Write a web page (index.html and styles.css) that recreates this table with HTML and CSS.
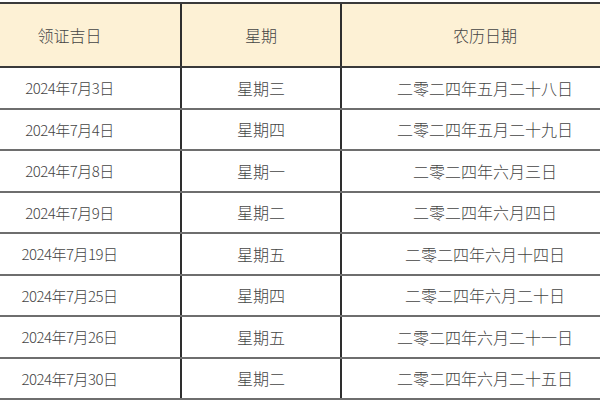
FILE: index.html
```html
<!DOCTYPE html>
<html lang="zh-CN">
<head>
<meta charset="utf-8">
<title>领证吉日</title>
<link rel="stylesheet" href="styles.css">
</head>
<body>
<div class="table">
  <div class="row head">
    <div class="cell">领证吉日</div>
    <div class="cell">星期</div>
    <div class="cell">农历日期</div>
  </div>
  <div class="row">
    <div class="cell date">2024年7月3日</div>
    <div class="cell">星期三</div>
    <div class="cell">二零二四年五月二十八日</div>
  </div>
  <div class="row">
    <div class="cell date">2024年7月4日</div>
    <div class="cell">星期四</div>
    <div class="cell">二零二四年五月二十九日</div>
  </div>
  <div class="row">
    <div class="cell date">2024年7月8日</div>
    <div class="cell">星期一</div>
    <div class="cell">二零二四年六月三日</div>
  </div>
  <div class="row">
    <div class="cell date">2024年7月9日</div>
    <div class="cell">星期二</div>
    <div class="cell">二零二四年六月四日</div>
  </div>
  <div class="row">
    <div class="cell date">2024年7月19日</div>
    <div class="cell">星期五</div>
    <div class="cell">二零二四年六月十四日</div>
  </div>
  <div class="row">
    <div class="cell date">2024年7月25日</div>
    <div class="cell">星期四</div>
    <div class="cell">二零二四年六月二十日</div>
  </div>
  <div class="row">
    <div class="cell date">2024年7月26日</div>
    <div class="cell">星期五</div>
    <div class="cell">二零二四年六月二十一日</div>
  </div>
  <div class="row">
    <div class="cell date">2024年7月30日</div>
    <div class="cell">星期二</div>
    <div class="cell">二零二四年六月二十五日</div>
  </div>
  <div class="row">
    <div class="cell"></div>
    <div class="cell"></div>
    <div class="cell"></div>
  </div>
</div>
</body>
</html>
```
FILE: styles.css
```css
html, body {
  margin: 0;
  padding: 0;
  background: #ffffff;
  overflow: hidden;
}
body {
  width: 600px;
  height: 400px;
}
.table {
  margin-top: 2px;
  margin-left: -41px;
  width: 669px;
  border-top: 2px solid #3a3a3a;
  font-family: "Noto Sans CJK SC", sans-serif;
  font-weight: 300;
  font-size: 16px;
  color: #444444;
}
.row {
  display: grid;
  grid-template-columns: 223px 160px 1fr;
  height: 41.5px;
  box-sizing: border-box;
  border-bottom: 2px solid #6e6e6e;
}
.row.head {
  height: 64px;
  background: #fdf1d5;
  border-bottom-color: #3a3a3a;
}
.cell {
  display: flex;
  align-items: center;
  justify-content: center;
  border-right: 2px solid #2e2e2e;
}
.cell:last-child {
  border-right: none;
}
.cell.date {
  font-size: 15px;
  letter-spacing: -0.5px;
}
```
